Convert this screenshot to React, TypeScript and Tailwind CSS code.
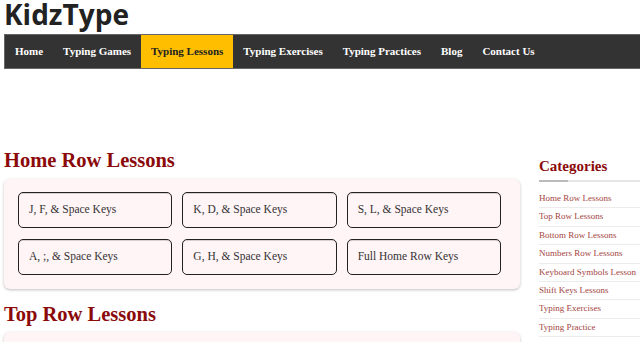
import React from "react";

const nav = ["Home", "Typing Games", "Typing Lessons", "Typing Exercises", "Typing Practices", "Blog", "Contact Us"];
const homeRow = ["J, F, & Space Keys", "K, D, & Space Keys", "S, L, & Space Keys", "A, ;, & Space Keys", "G, H, & Space Keys", "Full Home Row Keys"];
const topRow = ["U, R, & Space Keys", "I, E, & Space Keys", "O, W, & Space Keys", "P, Q, & Space Keys", "Y, T, & Space Keys", "Full Top Row Keys"];
const cats = ["Home Row Lessons", "Top Row Lessons", "Bottom Row Lessons", "Numbers Row Lessons", "Keyboard Symbols Lesson", "Shift Keys Lessons", "Typing Exercises", "Typing Practice"];

function Card({ items }: { items: string[] }) {
  return (
    <div className="bg-[#fff4f6] rounded-[6px] shadow-[0_1px_3px_rgba(0,0,0,0.25)] pl-[14px] pr-[19px] pt-[13px] pb-[14px] grid grid-cols-3 gap-x-[10px] gap-y-[11px]">
      {items.map((t) => (
        <div key={t} className="h-[36px] border-[1.5px] border-[#222] rounded-[5px] flex items-center pl-[10px] text-[11.5px] text-[#333] shadow-[inset_0_1px_0_rgba(0,0,0,0.15)]">
          {t}
        </div>
      ))}
    </div>
  );
}

export default function App() {
  return (
    <div className="w-[640px] h-[342px] overflow-hidden bg-white" style={{ fontFamily: '"Liberation Serif", serif' }}>
      <div className="h-[34px] pl-[4px] text-[28px] leading-[28px] font-bold text-[#222]" style={{ fontFamily: '"Open Sans", sans-serif' }}>
        KidzType
      </div>
      <div className="ml-[4px] h-[35px] flex bg-[#333] border border-r-0 border-[#666]">
        {nav.map((n) => (
          <div
            key={n}
            className={
              n === "Typing Lessons"
                ? "px-[10px] flex items-center text-[11px] font-bold bg-[#ffbf00] text-[#222]"
                : "px-[10px] flex items-center text-[11px] font-bold text-white"
            }
          >
            {n}
          </div>
        ))}
      </div>
      <div className="flex">
        <div className="w-[516px] ml-[4px] shrink-0">
          <h2 className="mt-[79px] mb-[7px] text-[20.5px] leading-[24px] font-bold text-[#8b0a0a]">Home Row Lessons</h2>
          <Card items={homeRow} />
          <h2 className="mt-[13px] mb-[6px] text-[20.5px] leading-[24px] font-bold text-[#8b0a0a]">Top Row Lessons</h2>
          <Card items={topRow} />
        </div>
        <div className="ml-[19px] w-[130px] shrink-0">
          <h3 className="mt-[88px] text-[15px] leading-[18px] font-bold text-[#8b0a0a]">Categories</h3>
          <div className="mt-[5px] h-[2px] bg-[#e6e6e6] flex">
            <div className="w-[29px] h-[2px] bg-[#bbbbbb]" />
          </div>
          <div className="mt-[8px]">
            {cats.map((c) => (
              <div key={c} className="h-[18.4px] leading-[17.4px] border-b border-[#ececec] text-[9px] text-[#a4453f] whitespace-nowrap">
                {c}
              </div>
            ))}
          </div>
        </div>
      </div>
    </div>
  );
}
